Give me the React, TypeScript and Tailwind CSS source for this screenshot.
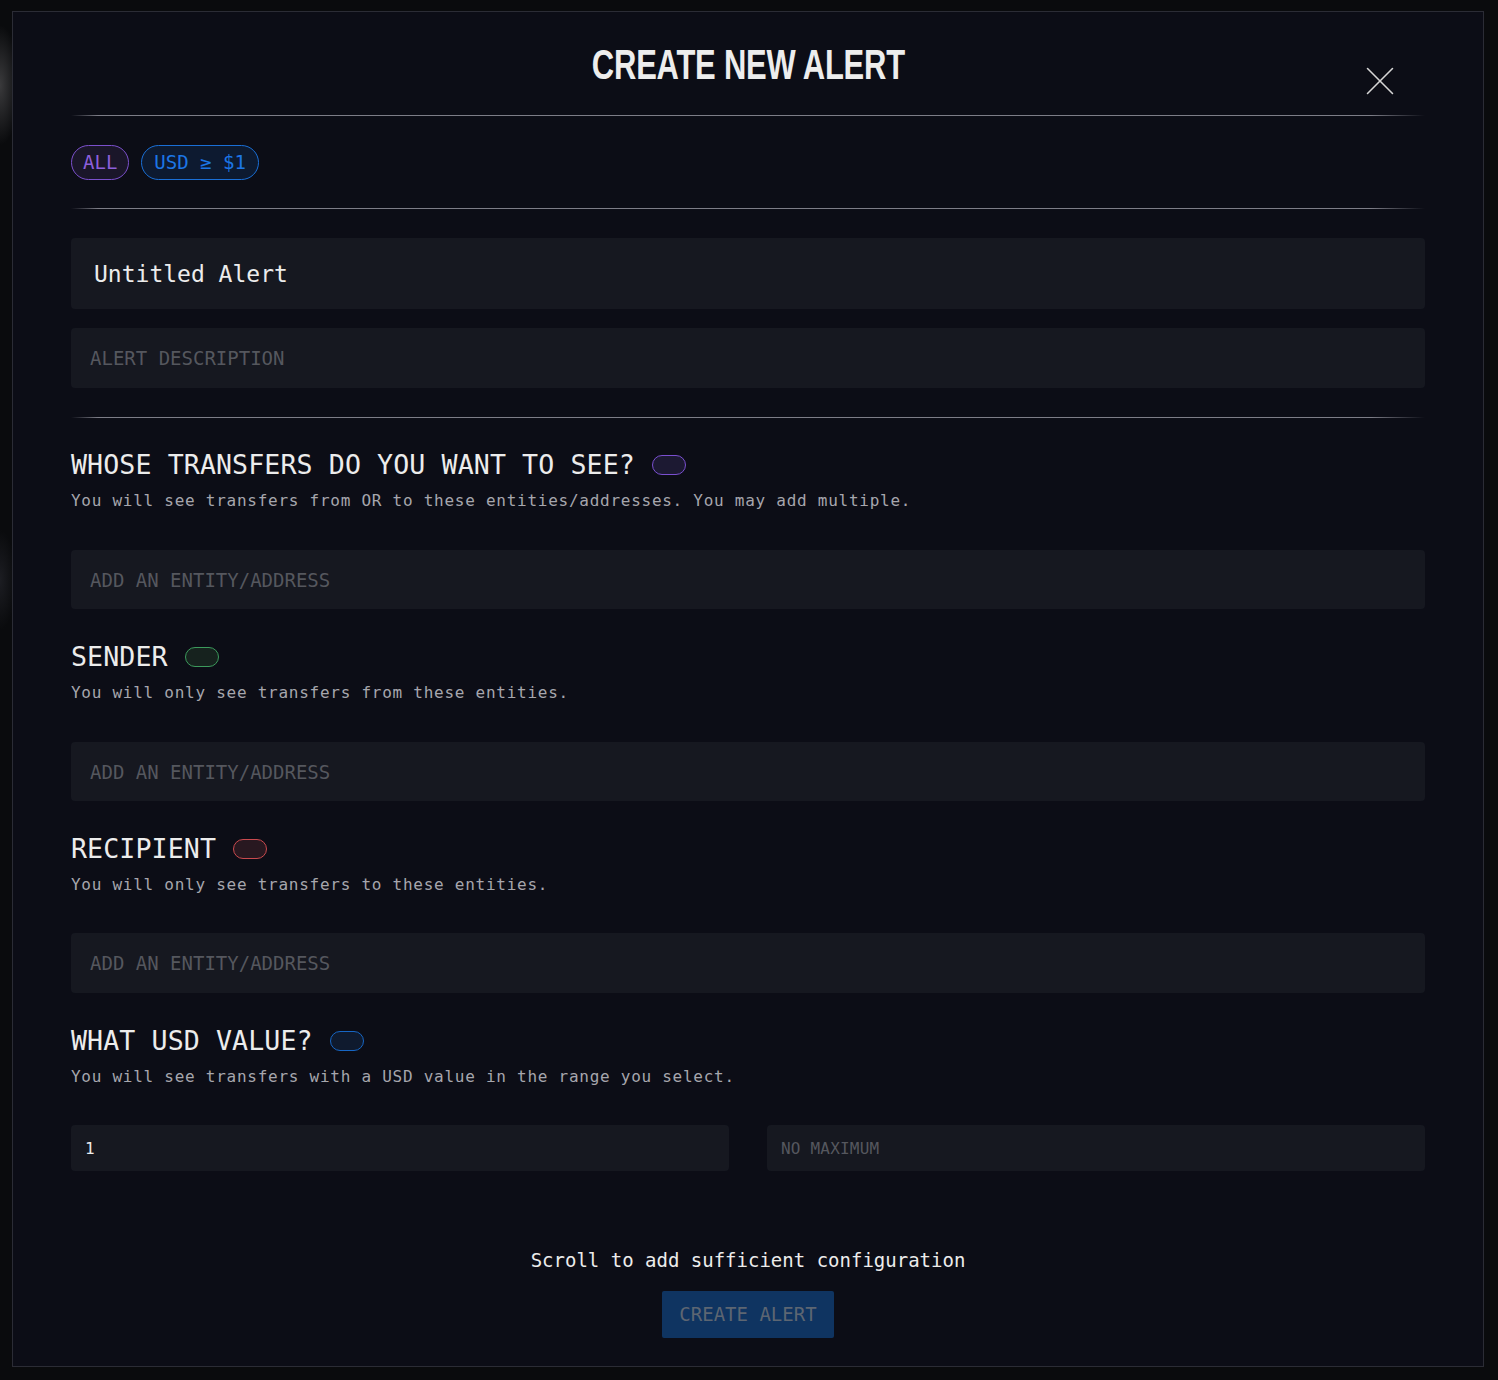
import { X } from "lucide-react";

const mono = "font-['DejaVu_Sans_Mono','Liberation_Mono',monospace]";

function Divider({ className = "" }: { className?: string }) {
  return (
    <div
      className={`h-px w-full bg-[linear-gradient(90deg,transparent,#7d7d87_2%,#7d7d87_96%,transparent)] ${className}`}
    />
  );
}

function Pill({ tone }: { tone: "purple" | "green" | "red" | "blue" }) {
  const styles = {
    purple: "border-[#7a4fd0] bg-[#1c1932]",
    green: "border-[#3c9a5c] bg-[#16221e]",
    red: "border-[#c94a4e] bg-[#281820]",
    blue: "border-[#1766c4] bg-[#0f1a2e]",
  };
  return <span className={`inline-block w-[34px] h-[20px] rounded-full border-[1.5px] ${styles[tone]}`} />;
}

function Field({
  placeholder,
  value,
  className = "",
}: {
  placeholder: string;
  value?: string;
  className?: string;
}) {
  return (
    <input
      readOnly
      value={value ?? ""}
      placeholder={placeholder}
      className={`block w-full rounded-[4px] bg-[#161820] outline-none text-[#ececec] placeholder:text-[#55575e] ${className}`}
    />
  );
}

function Section({
  title,
  tone,
  desc,
  children,
}: {
  title: string;
  tone: "purple" | "green" | "red" | "blue";
  desc: string;
  children: React.ReactNode;
}) {
  return (
    <div>
      <div className="flex items-center gap-[17px] h-[36px]">
        <h2 className="text-[26.6px] leading-[36px] tracking-[0.1px] text-[#ececec]">{title}</h2>
        <Pill tone={tone} />
      </div>
      <p className="mt-[6px] text-[16px] leading-[24px] tracking-[0.74px] text-[#a6a6ad]">{desc}</p>
      {children}
    </div>
  );
}

export default function App() {
  return (
    <div
      className={`w-[1498px] h-[1380px] pt-[11px] pl-[12px] bg-[radial-gradient(ellipse_20px_60px_at_0px_85px,#3a3a3c,transparent),radial-gradient(ellipse_16px_50px_at_0px_580px,#1c1d22,transparent)] bg-[#0a0b0d] ${mono}`}
    >
      <div className="relative w-[1472px] h-[1356px] border border-[#2b2c35] bg-[#0c0d16] px-[58px] pt-[28px]">
        <button className="absolute top-[44px] right-[78px] text-[#d6d6d6]">
          <X size={50} strokeWidth={0.75} />
        </button>

        <div className="h-[48px] flex items-center justify-center">
          <h1 className="font-['Liberation_Sans_Narrow','Liberation_Sans',sans-serif] font-bold text-[43px] leading-none text-[#ededed] scale-x-[0.72] tracking-[-0.3px]">
            CREATE NEW ALERT
          </h1>
        </div>

        <Divider className="mt-[27px]" />

        <div className="mt-[29px] flex gap-3 h-[35px]">
          <span className="flex items-center px-[11px] rounded-full border border-[#7b50cc] bg-[#1a1629] text-[#8d5fdc] text-[19px]">
            ALL
          </span>
          <span className="flex items-center px-[12px] rounded-full border border-[#1a6fd6] bg-[#0d1a30] text-[#1c76e6] text-[19px]">
            USD ≥ $1
          </span>
        </div>

        <Divider className="mt-[28px]" />

        <Field
          placeholder="Title"
          value="Untitled Alert"
          className="mt-[29px] h-[71px] px-[23px] text-[23px]"
        />
        <Field placeholder="ALERT DESCRIPTION" className="mt-[19px] h-[60px] px-[19px] text-[19px]" />

        <Divider className="mt-[29px]" />

        <div className="mt-[29px] flex flex-col gap-[30px]">
          <Section
            title="WHOSE TRANSFERS DO YOU WANT TO SEE?"
            tone="purple"
            desc="You will see transfers from OR to these entities/addresses. You may add multiple."
          >
            <Field placeholder="ADD AN ENTITY/ADDRESS" className="mt-[37px] h-[59px] px-[19px] text-[19px]" />
          </Section>
          <Section title="SENDER" tone="green" desc="You will only see transfers from these entities.">
            <Field placeholder="ADD AN ENTITY/ADDRESS" className="mt-[37px] h-[59px] px-[19px] text-[19px]" />
          </Section>
          <Section title="RECIPIENT" tone="red" desc="You will only see transfers to these entities.">
            <Field placeholder="ADD AN ENTITY/ADDRESS" className="mt-[36px] h-[60px] px-[19px] text-[19px]" />
          </Section>
          <Section
            title="WHAT USD VALUE?"
            tone="blue"
            desc="You will see transfers with a USD value in the range you select."
          >
            <div className="mt-[36px] grid grid-cols-2 gap-[38px]">
              <Field placeholder="" value="1" className="h-[46px] px-[14px] text-[16px]" />
              <Field placeholder="NO MAXIMUM" className="h-[46px] px-[14px] text-[16px] tracking-[0.2px]" />
            </div>
          </Section>
        </div>

        <p className="mt-[77px] text-center text-[19px] leading-[24px] text-[#ececec]">
          Scroll to add sufficient configuration
        </p>
        <div className="mt-[19px] flex justify-center">
          <button className="w-[172px] h-[47px] rounded-[2px] bg-[#0f3461] text-[19px] text-[#5d6672]">
            CREATE ALERT
          </button>
        </div>
      </div>
    </div>
  );
}
